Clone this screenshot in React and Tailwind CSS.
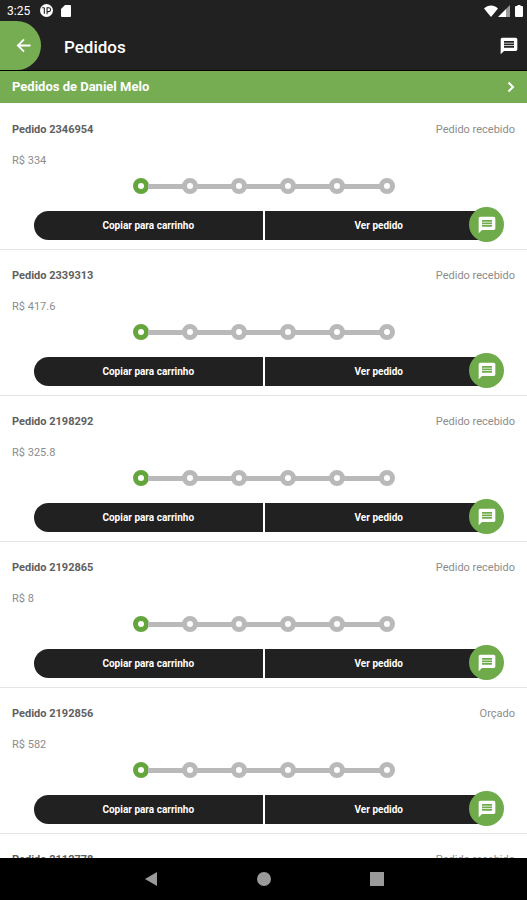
import React from "react";

const orders = [
  { id: "2346954", total: "334", status: "Pedido recebido", step: 0 },
  { id: "2339313", total: "417.6", status: "Pedido recebido", step: 0 },
  { id: "2198292", total: "325.8", status: "Pedido recebido", step: 0 },
  { id: "2192865", total: "8", status: "Pedido recebido", step: 0 },
  { id: "2192856", total: "582", status: "Orçado", step: 0 },
  { id: "2112778", total: "120", status: "Pedido recebido", step: 0 },
];

const steps = [0, 1, 2, 3, 4, 5];

const MessageIcon = ({ className }) => (
  <svg viewBox="0 0 24 24" fill="currentColor" className={className}>
    <path d="M20 2H4c-1.1 0-1.99.9-1.99 2L2 22l4-4h14c1.1 0 2-.9 2-2V4c0-1.1-.9-2-2-2zm-2 12H6v-2h12v2zm0-3H6V9h12v2zm0-3H6V6h12v2z" />
  </svg>
);

const StatusBar = () => (
  <div className="flex h-[21px] shrink-0 items-center bg-[#212121] pl-[7px] pr-1 text-white">
    <span className="text-xs">3:25</span>
    <svg viewBox="0 0 24 24" className="ml-[10px] h-[13px] w-[13px]">
      <circle cx="12" cy="12" r="12" fill="#fff" />
      <path
        d="M8 18V7M4 7h4M13 19V7h3a3.500 3.500 0 0 1 0 7h-3"
        fill="none"
        stroke="#212121"
        strokeWidth="2"
      />
    </svg>
    <svg
      viewBox="0 0 10 12"
      fill="currentColor"
      className="ml-2 h-[12px] w-[10px]"
    >
      <path d="M4 0h5a1 1 0 0 1 1 1v10a1 1 0 0 1-1 1H1a1 1 0 0 1-1-1V4z" />
    </svg>
    <div className="ml-auto flex items-center">
      <svg viewBox="0 0 14 12" fill="currentColor" className="h-3 w-[14px]">
        <path d="M7 12 0 3.500C2 1.500 4.500.5 7 .5s5 1 7 3z" />
      </svg>
      <svg viewBox="0 0 12 12" fill="currentColor" className="h-3 w-3">
        <path d="M12 0v12H8V4z" opacity=".55" />
        <path d="M8 4v8H0z" />
      </svg>
      <svg
        viewBox="0 0 8 12"
        fill="currentColor"
        className="ml-[5px] h-3 w-2"
      >
        <path d="M2.500 0h3v1H7a1 1 0 0 1 1 1v9a1 1 0 0 1-1 1H1a1 1 0 0 1-1-1V2a1 1 0 0 1 1-1h1.500z" />
      </svg>
    </div>
  </div>
);

const Header = () => (
  <header className="flex h-[50px] shrink-0 items-center border-b border-black bg-[#212121] pr-2 text-white">
    <button
      aria-label="Voltar"
      className="flex h-[49px] w-[41px] items-center justify-end rounded-r-full bg-[#76ad53] pr-[10px]"
    >
      <svg
        viewBox="0 0 16 16"
        fill="none"
        stroke="currentColor"
        strokeWidth="2"
        className="h-[15px] w-[15px]"
      >
        <path d="M15.500 8H2.500M8.500 1.500 2 8l6.500 6.500" />
      </svg>
    </button>
    <h1 className="ml-[23px] flex-1 pt-1 text-[17px] font-medium">Pedidos</h1>
    <button aria-label="Mensagens">
      <MessageIcon className="h-5 w-5" />
    </button>
  </header>
);

const Stepper = ({ current }) => (
  <div className="mx-auto mt-[9px] flex w-[262px] items-center">
    {steps.map((step) => (
      <React.Fragment key={step}>
        {step > 0 && <div className="-mx-px h-[5px] flex-1 bg-[#b9b9b9]" />}
        <div
          className={`h-4 w-4 shrink-0 rounded-full border-[5px] bg-white ${
            step === current ? "border-[#65a63c]" : "border-[#b9b9b9]"
          }`}
        />
      </React.Fragment>
    ))}
  </div>
);

const OrderCard = ({ order }) => (
  <li className="border-b border-[#e4e4e4] pt-[18px] pb-[9px]">
    <div className="flex justify-between px-3 text-[11px] leading-4">
      <h2 className="font-bold text-[#606060]">Pedido {order.id}</h2>
      <span className="text-[#8c8c8c]">{order.status}</span>
    </div>
    <p className="mt-[15px] px-3 text-[11px] leading-4 text-[#8c8c8c]">
      R$ {order.total}
    </p>
    <Stepper current={order.step} />
    <div className="relative mx-[34px] mt-[17px] flex gap-[2px] text-[10px] font-bold text-white">
      <button className="h-[29px] flex-1 rounded-l-full bg-[#212121]">
        Copiar para carrinho
      </button>
      <button className="h-[29px] flex-1 rounded-r-full bg-[#212121]">
        Ver pedido
      </button>
      <button
        aria-label="Enviar mensagem"
        className="absolute -right-[11px] -top-1 flex h-[35px] w-[35px] items-center justify-center rounded-full bg-[#6fab4b]"
      >
        <MessageIcon className="h-5 w-5" />
      </button>
    </div>
  </li>
);

const NavigationBar = () => (
  <nav className="flex h-[42px] shrink-0 justify-center bg-black text-[#9a9a9a]">
    <button aria-label="Voltar" className="flex w-[113px] items-center justify-center">
      <svg viewBox="0 0 12 14" fill="currentColor" className="h-[14px] w-3">
        <path d="M12 0v14L0 7z" />
      </svg>
    </button>
    <button aria-label="Início" className="flex w-[113px] items-center justify-center">
      <span className="h-[14px] w-[14px] rounded-full bg-[#9a9a9a]" />
    </button>
    <button aria-label="Recentes" className="flex w-[113px] items-center justify-center">
      <span className="h-[14px] w-[14px] bg-[#9a9a9a]" />
    </button>
  </nav>
);

const App = () => {
  return (
    <div className="flex h-screen flex-col overflow-hidden bg-white font-['Roboto',sans-serif]">
      <StatusBar />
      <Header />
      <button className="flex h-8 shrink-0 items-center justify-between bg-[#76ad53] px-3 text-[13px] font-bold text-white">
        Pedidos de Daniel Melo
        <svg
          viewBox="0 0 8 12"
          fill="none"
          stroke="currentColor"
          strokeWidth="2"
          className="h-3 w-2"
        >
          <path d="M1.500 1.500 6 6l-4.500 4.500" />
        </svg>
      </button>
      <main className="min-h-0 flex-1 overflow-y-auto pt-px [scrollbar-width:none]">
        <ul>
          {orders.map((order) => (
            <OrderCard key={order.id} order={order} />
          ))}
        </ul>
      </main>
      <NavigationBar />
    </div>
  );
};

export default App;
